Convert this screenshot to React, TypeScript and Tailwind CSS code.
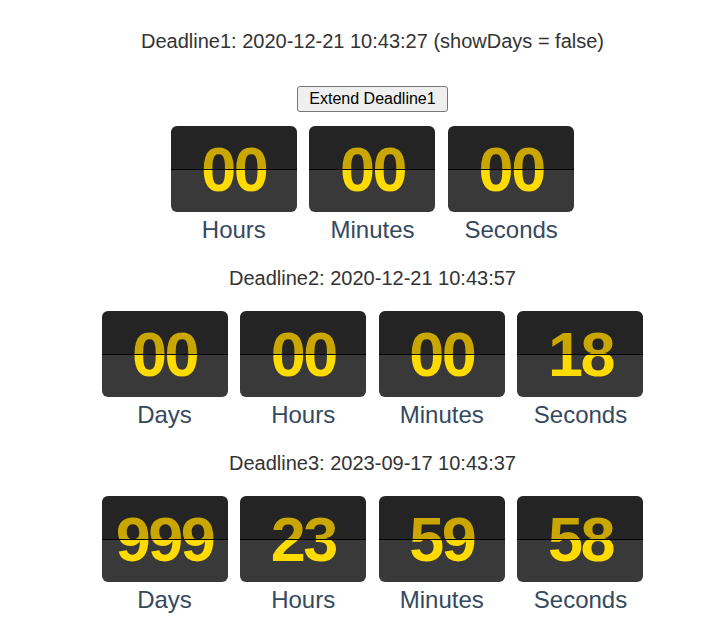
const FONT = "font-['Liberation_Sans',Arial,sans-serif]";

type Unit = { value: string; label: string };

const DEADLINES: { title: string; button?: string; units: Unit[] }[] = [
  {
    title: 'Deadline1: 2020-12-21 10:43:27 (showDays = false)',
    button: 'Extend Deadline1',
    units: [
      { value: '00', label: 'Hours' },
      { value: '00', label: 'Minutes' },
      { value: '00', label: 'Seconds' },
    ],
  },
  {
    title: 'Deadline2: 2020-12-21 10:43:57',
    units: [
      { value: '00', label: 'Days' },
      { value: '00', label: 'Hours' },
      { value: '00', label: 'Minutes' },
      { value: '18', label: 'Seconds' },
    ],
  },
  {
    title: 'Deadline3: 2023-09-17 10:43:37',
    units: [
      { value: '999', label: 'Days' },
      { value: '23', label: 'Hours' },
      { value: '59', label: 'Minutes' },
      { value: '58', label: 'Seconds' },
    ],
  },
];

function FlipCard({ value, label }: Unit) {
  return (
    <div className="flex w-[126px] flex-col items-center">
      <div className="relative h-[86px] w-full overflow-hidden rounded-[6px] bg-[linear-gradient(to_bottom,#242424_50%,#393939_50%)]">
        <div className="flex h-full items-center justify-center bg-[linear-gradient(to_bottom,#c9a700_50%,#ffdb00_50%)] bg-clip-text text-[63px] font-bold leading-none tracking-[-2.5px] text-transparent">
          {value}
        </div>
        <div className="absolute left-0 right-0 top-[43px] h-px bg-black" />
      </div>
      <div className="mt-[3px] text-[24px] leading-[29px] text-[#34495e]">{label}</div>
    </div>
  );
}

export default function App() {
  return (
    <div className={`${FONT} flex flex-col items-center bg-white pb-8 pl-[19px] pt-[30px]`}>
      {DEADLINES.map((d, i) => (
        <section key={d.title} className={`flex flex-col items-center ${i > 0 ? 'mt-[23px]' : ''}`}>
          <p className="text-[20px] leading-[23px] text-[#333]">{d.title}</p>
          {d.button && (
            <button className="mt-[33px] h-[26px] rounded-[3px] border border-[#767676] bg-[#efefef] px-[11px] text-[16px] leading-[18px] text-black">
              {d.button}
            </button>
          )}
          <div className={`flex gap-[12.67px] ${d.button ? 'mt-[14px]' : 'mt-[21px]'}`}>
            {d.units.map((u) => (
              <FlipCard key={u.label} {...u} />
            ))}
          </div>
        </section>
      ))}
    </div>
  );
}
